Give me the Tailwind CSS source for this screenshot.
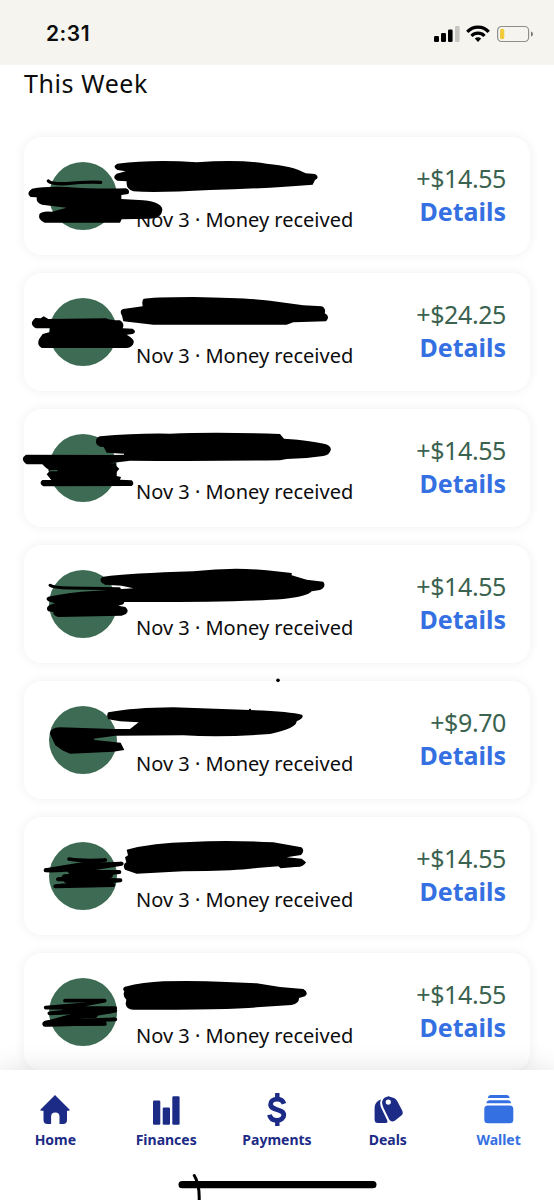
<!DOCTYPE html>
<html lang="en">
<head>
<meta charset="utf-8">
<title>Wallet</title>
<script src="https://cdn.jsdelivr.net/npm/@tailwindcss/browser@4"></script>
</head>
<body class="bg-white">
<div class="relative flex h-[1200px] w-[554px] flex-col overflow-hidden bg-white font-['Noto_Sans',sans-serif] text-[#0c0c0d]">
  <header class="flex h-[65px] shrink-0 items-start justify-between bg-[#f5f4ef] pl-[46px] pr-[21px]">
    <span class="mt-[19px] font-['Inter',sans-serif] text-[21px] font-semibold leading-[30px] tracking-[0.5px]">2:31</span>
    <svg class="mt-[24px] h-5 w-[100px]" viewBox="0 0 100 20">
      <g fill="#000"><rect x="1" y="12" width="5" height="6" rx="1.3"/><rect x="8" y="9" width="5" height="9" rx="1.3"/><rect x="15" y="5.500" width="4.600" height="12.500" rx="1.300"/></g>
      <rect x="22" y="2" width="4.600" height="16" rx="1.300" fill="#c6c5c1"/>
      <g fill="none" stroke="#000" stroke-width="3.200"><path d="M34.300 7.900a14.300 14.300 0 0 1 21.400 0"/><path d="M38.500 12a9 9 0 0 1 13 0"/></g>
      <path d="M41.800 14.500q3.200-2.700 6.400 0L45 18z" fill="#000"/>
      <rect x="64.600" y="2.500" width="31" height="15" rx="4" fill="none" stroke="#8f8e8b" stroke-width="1.200"/>
      <rect x="67" y="4.700" width="4.300" height="10.600" rx="1.700" fill="#f2cb3a"/>
      <path d="M98 7.500q2 .5 2 2.500t-2 2.500z" fill="#777"/>
    </svg>
  </header>
  <main class="flex min-h-0 flex-1 flex-col">
    <h1 class="h-[72px] shrink-0 pl-6 text-[25px] font-normal leading-[36px] tracking-[0.6px]">This Week</h1>
    <ul id="list" class="flex shrink-0 flex-col gap-[18px] px-6"></ul>
  </main>
  <nav class="absolute inset-x-0 bottom-0 h-[130px] bg-white shadow-[0_0_26px_rgba(0,0,0,0.13)]">
    <div class="grid grid-cols-5 pt-[22px] text-[14px] font-bold leading-5 text-[#1c2b86]">
      <a class="flex flex-col items-center gap-[2px]"><svg class="h-9 w-9" viewBox="0 0 36 36" fill="currentColor"><path d="M18 3 32.500 17.500q.5 1.200-.8 1.200H30V28q0 4-4 4h-3.500V24.500q0-4-4.200-4t-4.200 4V32H10.500q-4 0-4-4V18.700H4.300q-1.300 0-.8-1.200z"/></svg><span>Home</span></a>
      <a class="flex flex-col items-center gap-[2px]"><svg class="h-9 w-9" viewBox="0 0 36 36" fill="currentColor"><rect x="5" y="8.500" width="7.300" height="24.300" rx="1.200"/><rect x="14.700" y="15.500" width="7.300" height="17.300" rx="1.200"/><rect x="24.300" y="4.300" width="7.300" height="28.500" rx="1.200"/></svg><span>Finances</span></a>
      <a class="flex flex-col items-center gap-[2px]"><svg class="h-9 w-9" viewBox="0 0 36 36" fill="none" stroke="currentColor"><path d="M25 11.800C23.700 8.200 20.800 7 17.800 7.200c-4 .2-6.300 2.400-6.200 5.200.2 6.800 13.200 3.800 13.200 10.600 0 3.300-3 5.400-7 5.300-4-.1-6.600-2-7.300-5.600" stroke-width="4.800"/><path d="M18.300 1v7M18.300 27v7" stroke-width="4.400"/></svg><span>Payments</span></a>
      <a class="flex flex-col items-center gap-[2px]"><svg class="h-9 w-9" viewBox="0 0 36 36" fill="currentColor"><path d="M11 7.500Q9.300 11.500 11.300 16L17.300 28.500Q18 31 15.800 31H8Q4.600 31 4.600 27.500V16Q4.600 9.500 11 7.500z"/><path fill-rule="evenodd" d="M14.500 5.700 18.300 4.300 24 6Q26 7 27.300 9.300L32.300 18.700Q33.800 22.300 30.700 24L24.800 28.800Q21.300 30.700 19.200 27.500L13.300 15.500Q10.500 8.500 14.500 5.700zM18.300 7.500a2.600 2.600 0 1 0 0 5.200 2.600 2.600 0 0 0 0-5.200z"/></svg><span>Deals</span></a>
      <a class="flex flex-col items-center gap-[2px] text-[#3470e2]"><svg class="h-9 w-9" viewBox="0 0 36 36" fill="currentColor"><path d="M10 3H25.500Q28.300 3 28.600 6H6.900Q7.200 3 10 3zM8.600 8.300H26.900Q29.600 8.300 30.200 11.300H5.300Q5.900 8.300 8.600 8.300z"/><rect x="3.300" y="13.500" width="29" height="17.700" rx="3.500"/></svg><span>Wallet</span></a>
    </div>
    <svg class="absolute left-[170px] top-[102px] h-[28px] w-[214px]" viewBox="0 0 214 28"><rect x="8.500" y="9" width="198" height="7.300" rx="3.600"/><path d="M24.300 3.500Q29.600 12 29.200 28" fill="none" stroke="#000" stroke-width="3" stroke-linecap="round"/></svg>
  </nav>
</div>
<script>
// Marker strokes use a 3x grid whose origin sits 14px left of each card.
const rows = [
  { amount: '+$14.55', top: -7, art: `
    <path d="M322 101Q430 88 560 97Q690 88 770 101Q850 108 887 130L915 132Q931 142 915 150L908 164Q780 175 600 180Q440 189 370 184Q347 178 350 154L322 152Q304 143 320 131L347 124L322 120Q305 110 322 101Z"/>
    <path d="M66 176Q110 168 170 171Q250 177 348 175Q362 181 355 192L334 195V207L400 211Q457 217 457 240Q455 265 420 266L335 268L330 278H104Q83 270 88 253Q96 242 125 245L170 233L96 224Q78 220 80 202L62 201Q46 190 66 176Z"/>
    <path d="M115 153Q123 163 170 161Q225 155 272 157" fill="none" stroke="#000" stroke-width="10" stroke-linecap="round"/>` },
  { amount: '+$24.25', top: -5, art: `
    <path d="M400 93Q420 87 550 87Q720 90 780 98L880 112L935 115Q949 121 944 136Q962 145 948 160L850 163L830 170H430L340 160L336 143Q325 124 345 122L398 115Q395 100 400 93Z"/>
    <path d="M76 150L92 151L101 145L115 153L288 151Q300 157 330 157Q345 166 338 181L368 182Q382 191 368 198L350 200Q375 214 371 224Q368 237 350 240H95Q78 229 88 212L98 198L120 192V181H78Q54 168 76 150Z"/>` },
  { amount: '+$14.55', top: -5, art: `
    <path fill-rule="evenodd" d="M270 97Q380 87 480 89Q620 83 810 90L822 104Q910 110 948 121Q965 128 962 139Q958 154 940 156L890 162L830 165L810 169Q570 172 360 170L300 178H318V185L328 194L320 204V216L333 219L330 227L365 229Q375 239 365 246L100 247Q85 238 97 228H124L110 211L120 200L106 190L97 181H50Q28 165 48 152L310 153L342 152V149L290 146L281 129Q258 128 258 113Q258 100 270 97ZM115 199L142 198V202H115Z"/>` },
  { amount: '+$14.55', top: -5, art: `
    <path d="M280 110Q360 100 550 94Q670 80 770 91L845 99V106L890 119L940 125Q950 142 930 150L905 154Q892 170 820 177Q680 187 343 186L340 193L325 197L346 201Q359 212 348 222L335 227L145 231Q128 226 130 216L115 214Q105 204 118 195L135 190L115 184Q104 175 115 170Q180 157 250 153L335 147L370 145L335 137L285 134Q269 126 272 117Q274 111 280 110Z"/>
    <path d="M120 136Q130 143 180 144L328 146" fill="none" stroke="#000" stroke-width="9" stroke-linecap="round"/>` },
  { amount: '+$9.70', top: -9, art: `
    <path d="M295 121Q370 107 490 106L720 114Q840 118 876 128Q884 137 860 148Q860 169 780 186Q640 197 520 190L316 191L250 200L255 204L332 212L343 234L310 239L180 245L157 235L136 220L120 185Q120 167 150 166L310 171H360L386 151L330 148L295 142Q288 130 295 121Z"/><circle cx="804" cy="25" r="5.500"/><circle cx="720" cy="114" r="3.500"/>` },
  { amount: '+$14.55', top: -5, art: `
    <path d="M350 113Q430 92 540 90Q650 83 790 91L874 106Q886 115 873 129L830 136L875 140L888 151Q880 167 855 165L812 169L805 163L740 168Q700 175 590 177L520 178L380 185L345 173Q336 158 349 151L345 136L354 130Z"/>
    <g fill="none" stroke="#000" stroke-linecap="round" stroke-linejoin="round"><path stroke-width="11" d="M177 141Q220 148 286 144L230 154L107 174"/><path stroke-width="12" d="M107 175Q190 177 240 158L335 155L180 180L328 180L144 202L331 205L136 223L310 219"/><path stroke-width="18" d="M188 179L260 157M165 196L300 189M170 204L290 207"/></g>` },
  { amount: '+$14.55', top: -5, art: `
    <path d="M345 116Q400 103 460 100Q550 97 650 102L740 106L810 117L880 123Q898 134 885 145L867 150Q868 165 845 171L740 178Q660 185 370 185Q348 183 347 167L349 155Q337 145 343 130Q335 121 345 116Z"/>
    <g fill="none" stroke="#000" stroke-linecap="round" stroke-linejoin="round"><path stroke-width="11" d="M165 158H284L225 169L107 179L316 180L220 184L118 196L316 188L230 203L106 224L316 214L220 217L106 229L285 228"/><path stroke-width="16" d="M165 188H300M180 207L105 228L280 224M185 205L255 202"/></g>` }
];
document.getElementById('list').innerHTML = rows.map(r => `
  <li class="relative flex h-[118px] shrink-0 items-start rounded-[18px] bg-white pl-[25px] pr-6 shadow-[0_0_12px_rgba(0,0,0,0.065)]">
    <div class="mt-[25px] size-[68px] shrink-0 rounded-full bg-[#3d6b54]"></div>
    <p class="ml-[19px] mt-[69px] whitespace-nowrap text-[20px] leading-[28px]">Nov 3 · Money received</p>
    <div class="ml-auto mt-[25px] flex flex-col items-end text-[25px] leading-[33px]">
      <span class="tracking-[-0.4px] text-[#3a624f]">${r.amount}</span>
      <a class="font-bold text-[#3470e2]">Details</a>
    </div>
    <svg class="pointer-events-none absolute left-[-14px] h-[130px] w-[360px] overflow-visible" style="top:${r.top}px" viewBox="0 0 1080 390">${r.art}</svg>
  </li>`).join('');
</script>
</body>
</html>
